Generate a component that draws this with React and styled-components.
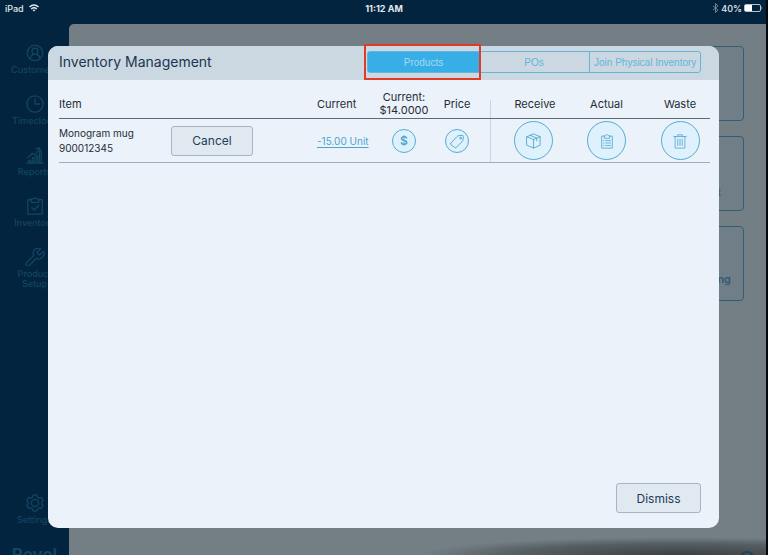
import React from "react";
import styled, { createGlobalStyle, css } from "styled-components";
import { Wrench } from "lucide-react";

const GlobalStyle = createGlobalStyle`
  *, *::before, *::after { box-sizing: border-box; }
  body { margin: 0; background: #02243e; font-family: Inter, "Liberation Sans", sans-serif; }
  button { font: inherit; margin: 0; cursor: pointer; }
`;

const Screen = styled.div`
  position: relative;
  display: flex;
  flex-direction: column;
  height: 100vh;
  overflow: hidden;
  background: #02243e;
  border-right: 2px solid #04080b;
`;

const StatusBar = styled.header`
  display: grid;
  grid-template-columns: 1fr auto 1fr;
  align-items: center;
  flex: none;
  height: 24px;
  padding: 0 3px 8px 5px;
  color: #e4e9ed;
  font-size: 9px;
  font-weight: 500;
`;

const StatusGroup = styled.div`
  display: flex;
  align-items: center;
  justify-content: ${(p) => (p.$end ? "flex-end" : "flex-start")};
  gap: ${(p) => (p.$end ? "2px" : "5px")};
`;

const Clock = styled.time`
  font-size: 9px;
  font-weight: 700;
`;

const Body = styled.div`
  display: flex;
  flex: 1;
  min-height: 0;
`;

const Sidebar = styled.nav`
  display: flex;
  flex-direction: column;
  align-items: center;
  gap: 20px;
  flex: none;
  width: 69px;
  padding-top: 20px;
  color: #124563;
  overflow: hidden;
`;

const NavItem = styled.a`
  display: flex;
  flex-direction: column;
  align-items: center;
  gap: 3px;
  width: 52px;
  color: inherit;
  font-size: 9px;
  font-weight: 500;
  line-height: 10px;
  text-align: center;
  text-decoration: none;
  margin-top: ${(p) => (p.$last ? "auto" : "0")};
  svg { display: block; width: 20px; height: 18px; }
`;

const Brand = styled.div`
  flex: none;
  height: 10px;
  font-size: 17px;
  font-weight: 700;
  line-height: 20px;
`;

const Main = styled.main`
  position: relative;
  display: flex;
  flex-direction: column;
  gap: 15px;
  flex: 1;
  min-width: 0;
  padding: 22px 22px 0 24px;
  border-top-left-radius: 5px;
  background: #747f85;
`;

const Tile = styled.a`
  display: flex;
  align-items: flex-end;
  justify-content: flex-end;
  flex: none;
  height: 75px;
  padding: ${(p) => (p.$wide ? "0 12px 14px" : "0 22px 11px")};
  border: 1px solid #325e75;
  border-radius: 4px;
  background: #707e87;
  color: #315a73;
  font-size: 11px;
  font-weight: 600;
  text-decoration: none;
`;

const BottomShade = styled.div`
  position: absolute;
  right: 0;
  bottom: 0;
  left: 50%;
  height: 18px;
  background: radial-gradient(ellipse at 75% 100%, #3a4145 0%, rgba(66, 73, 77, 0.6) 45%, rgba(116, 127, 133, 0) 70%);
`;

const HelpDot = styled.div`
  position: absolute;
  right: 12px;
  bottom: -10px;
  width: 14px;
  height: 14px;
  border: 2px solid #1d4259;
  border-radius: 50%;
`;

const Overlay = styled.div`
  position: absolute;
  inset: 0;
  display: flex;
  padding: 46px 47px 27px 48px;
`;

const Dialog = styled.section`
  display: flex;
  flex-direction: column;
  flex: 1;
  min-width: 0;
  border-radius: 10px;
  background: #ebf2fa;
  color: #252c35;
`;

const DialogHeader = styled.div`
  display: flex;
  align-items: center;
  justify-content: space-between;
  height: 34px;
  padding: 0 18px 2px 11px;
  border-radius: 10px 10px 0 0;
  background: #cbd8e1;
`;

const Title = styled.h1`
  margin: 0;
  color: #203553;
  font-size: 14px;
  font-weight: 400;
  line-height: 20px;
`;

const Segments = styled.div`
  display: grid;
  grid-template-columns: repeat(3, 1fr);
  width: 52%;
  height: 22px;
  border: 1px solid #62b5db;
  border-radius: 3px;
`;

const Segment = styled.button`
  position: relative;
  padding: 0;
  border: 0;
  border-left: ${(p) => (p.$divided ? "1px solid #62b5db" : "0")};
  background: transparent;
  color: #62b5db;
  font-family: "Liberation Sans", sans-serif;
  font-size: 10px;
  white-space: nowrap;
  ${(p) => p.$active && css`
    background: #37afe6;
    color: #a5d9f4;
    &::after {
      content: "";
      position: absolute;
      inset: -8px -2px -8px -4px;
      border: 2px solid #df3b25;
      z-index: 1;
    }
  `}
`;

const TableArea = styled.div`
  flex: 1;
  padding: 0 9px 0 11px;
`;

const Table = styled.table`
  width: 100%;
  table-layout: fixed;
  border-collapse: separate;
  border-spacing: 0;
  font-size: 11px;
  line-height: 14px;
`;

const Col = styled.col`
  width: ${(p) => p.$width};
`;

const HeadCell = styled.th`
  height: 39px;
  padding: ${(p) => p.$pad || "0"};
  padding-top: 9px;
  border-bottom: 1px solid #5f6974;
  font-weight: 400;
  text-align: ${(p) => (p.$center ? "center" : "left")};
  background: ${(p) => (p.$divided ? "linear-gradient(#cbd4de, #cbd4de) left bottom / 1px 18px no-repeat" : "none")};
`;

const Cell = styled.td`
  height: 44px;
  padding: ${(p) => p.$pad || "0"};
  border-bottom: 1px solid #a4adb7;
  text-align: ${(p) => (p.$center ? "center" : "left")};
  background: ${(p) => (p.$divided ? "linear-gradient(#cbd4de, #cbd4de) left top / 1px 100% no-repeat" : "none")};
`;

const CostHeading = styled.span`
  display: block;
  line-height: 13px;
`;

const Product = styled.div`
  font-size: 10px;
  line-height: 15px;
`;

const PushButton = styled.button`
  width: ${(p) => p.$width};
  height: 30px;
  padding: 0;
  border: 1px solid #a7b4c3;
  border-radius: 3px;
  background: #e0e8f0;
  color: #223b59;
  font-size: 12px;
`;

const QuantityLink = styled.a`
  color: #4ba5ce;
  font-size: 10px;
  white-space: nowrap;
  text-underline-offset: 2px;
`;

const RoundButton = styled.button`
  display: inline-flex;
  align-items: center;
  justify-content: center;
  width: ${(p) => (p.$large ? "39px" : "24px")};
  height: ${(p) => (p.$large ? "39px" : "24px")};
  padding: 0;
  border: 1px solid #55acd1;
  border-radius: 50%;
  background: #def1fc;
  color: #4aa5cf;
  font-size: 12px;
  font-weight: 600;
  vertical-align: middle;
`;

const DialogFooter = styled.div`
  display: flex;
  justify-content: flex-end;
  padding: 0 18px 15px;
`;

const Drawing = ({ children, box = 20, width = 20, height = 20, weight = 1 }) => (
  <svg width={width} height={height} viewBox={`0 0 ${box} ${box}`} fill="none" stroke="currentColor"
    strokeWidth={weight} strokeLinecap="round" strokeLinejoin="round" aria-hidden="true">{children}</svg>
);

const Person = () => <Drawing weight={1.5}>
  <circle cx="10" cy="10" r="8.5" /><circle cx="10" cy="8" r="3.3" />
  <path d="M4.5 16c.3-2.5 1.6-3.6 3.500-4.200M15.500 16c-.3-2.500-1.600-3.600-3.500-4.200" />
</Drawing>;
const TimeIcon = () => <Drawing weight={1.5}><circle cx="10" cy="10" r="9" /><path d="M10 4v6h5" /></Drawing>;
const ChartIcon = () => <Drawing weight={1.4}>
  <path d="M1 19h18M3 19v-3h2v3M7 19v-6h2v6M11 19V11h2v8M15 19V6h2v13M2 13l5-5 3 2 5-7M11 3l4-1 1 4" />
</Drawing>;
const CheckBoard = () => <Drawing weight={1.5}>
  <path d="M6 3H2v16h16V3h-4M6 2h2l2-1 2 1h2v4H6zM6.500 12l2.500 2.500 5-5" />
</Drawing>;
const Gear = () => <Drawing weight={1.5}>
  <path d="M8 1h4l.7 2.300 2 1.200 2.400-.6 2 3.400L17.500 9v2l1.600 1.700-2 3.400-2.400-.6-2 1.200L12 19H8l-.7-2.300-2-1.200-2.400.6-2-3.400L2.500 11V9L.9 7.300l2-3.400 2.400.6 2-1.200z" />
  <circle cx="10" cy="10" r="4" />
</Drawing>;
const Tag = () => <Drawing box={18} width={16} height={16}>
  <path d="M2 11.500L9 4Q9.800 3.100 11 3l4-.3q1.200 0 1.100 1.200L15.700 8q-.1 1-.9 1.800L8 16.300q-.8.7-1.600 0L2 13q-.8-.7 0-1.500z" /><circle cx="13" cy="5.800" r="1" />
</Drawing>;
const Box = () => <Drawing box={18} width={17} height={17} weight={0.9}>
  <path d="M2 5l7-3 7 3v9l-7 3-7-3zM2 5l7 3 7-3M9 8v9M5.500 3.500l7 3v3" />
</Drawing>;
const List = () => <Drawing box={18} width={16} height={16} weight={0.9}>
  <path d="M6 3.500H3V17h12V3.500h-3M6 5.500V3h1.500Q9 0 10.500 3H12v2.500zM7.500 8.500H13M7.500 11.200H13M7.500 14H13M5 8.500h.5M5 11.200h.5M5 14h.5" />
</Drawing>;
const Bin = () => <Drawing box={18} width={16} height={16} weight={0.9}>
  <path d="M2 4h14M6.500 4V2h5v2M3.500 4v13h11V4M6.500 7v7M9 7v7M11.500 7v7" />
</Drawing>;

const Wifi = () => (
  <svg width="10" height="8" viewBox="0 0 20 16" fill="none" stroke="currentColor" strokeWidth="3" aria-hidden="true">
    <path d="M1 6Q10-2 19 6M4.500 10Q10 5 15.500 10" /><path d="M7 12q3-2 6 0l-3 3z" fill="currentColor" stroke="none" />
  </svg>
);
const Bluetooth = () => (
  <svg width="7" height="10" viewBox="0 0 7 10" fill="none" stroke="#71818f" aria-hidden="true">
    <path d="M1 3l5 4-2.500 2.500v-9L6 3 1 7" />
  </svg>
);
const Battery = () => (
  <svg width="19" height="8" viewBox="0 0 19 8" fill="none" aria-hidden="true">
    <rect x=".5" y=".5" width="16" height="7" rx="1.500" stroke="#b8c2ca" />
    <rect x="1" y="1" width="7" height="6" fill="#fff" /><path d="M17.500 2.500q1.500 1.500 0 3z" fill="#e4e9ed" />
  </svg>
);

const navigation = [
  ["Customers", <Person />],
  ["Timeclock", <TimeIcon />],
  ["Reports", <ChartIcon />],
  ["Inventory", <CheckBoard />],
  ["Product Setup", <Wrench viewBox="2 2 20 20" strokeWidth={1.5} />],
];

export default function App() {
  return (
    <>
      <GlobalStyle />
      <Screen>
        <StatusBar>
          <StatusGroup>iPad <Wifi /></StatusGroup>
          <Clock>11:12 AM</Clock>
          <StatusGroup $end><Bluetooth /> 40% <Battery /></StatusGroup>
        </StatusBar>
        <Body>
          <Sidebar>
            {navigation.map(([name, icon]) => <NavItem href="#" key={name}>{icon}{name}</NavItem>)}
            <NavItem href="#" $last><Gear />Settings</NavItem>
            <Brand>Revel</Brand>
          </Sidebar>
          <Main>
            <Tile href="#" aria-label="Products" />
            <Tile href="#">Receipt</Tile>
            <Tile href="#" $wide>Purchasing</Tile>
            <BottomShade />
            <HelpDot />
          </Main>
        </Body>
        <Overlay>
          <Dialog role="dialog" aria-labelledby="dialog-title">
            <DialogHeader>
              <Title id="dialog-title">Inventory Management</Title>
              <Segments>
                <Segment $active aria-pressed="true">Products</Segment>
                <Segment aria-pressed="false">POs</Segment>
                <Segment $divided aria-pressed="false">Join Physical Inventory</Segment>
              </Segments>
            </DialogHeader>
            <TableArea>
              <Table>
                <colgroup>
                  <Col $width="112px" /><Col /><Col $width="57px" /><Col $width="60px" />
                  <Col $width="56px" /><Col $width="80px" /><Col $width="73px" /><Col $width="67px" />
                </colgroup>
                <thead>
                  <tr>
                    <HeadCell colSpan={2}>Item</HeadCell>
                    <HeadCell>Current</HeadCell>
                    <HeadCell $center><CostHeading>Current: $14.0000</CostHeading></HeadCell>
                    <HeadCell $center $pad="0 10px 0 0">Price</HeadCell>
                    <HeadCell $center $divided $pad="0 0 0 10px">Receive</HeadCell>
                    <HeadCell $center>Actual</HeadCell>
                    <HeadCell $center $pad="0 0 0 7px">Waste</HeadCell>
                  </tr>
                </thead>
                <tbody>
                  <tr>
                    <Cell><Product>Monogram mug<br />900012345</Product></Cell>
                    <Cell><PushButton $width="82px">Cancel</PushButton></Cell>
                    <Cell><QuantityLink href="#">-15.00 Unit</QuantityLink></Cell>
                    <Cell $center><RoundButton aria-label="Cost">$</RoundButton></Cell>
                    <Cell $center $pad="0 10px 0 0"><RoundButton aria-label="Price"><Tag /></RoundButton></Cell>
                    <Cell $center $divided $pad="0 0 0 6px"><RoundButton $large aria-label="Receive"><Box /></RoundButton></Cell>
                    <Cell $center><RoundButton $large aria-label="Actual"><List /></RoundButton></Cell>
                    <Cell $center $pad="0 0 0 7px"><RoundButton $large aria-label="Waste"><Bin /></RoundButton></Cell>
                  </tr>
                </tbody>
              </Table>
            </TableArea>
            <DialogFooter><PushButton $width="85px">Dismiss</PushButton></DialogFooter>
          </Dialog>
        </Overlay>
      </Screen>
    </>
  );
}
